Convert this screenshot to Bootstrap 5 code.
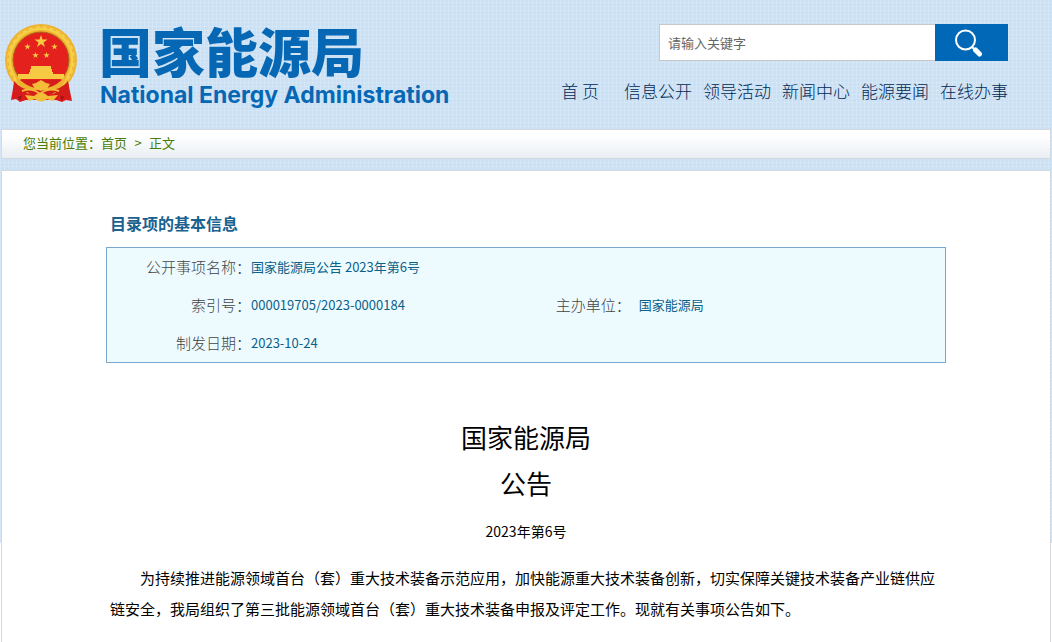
<!DOCTYPE html>
<html lang="zh-CN">
<head>
<meta charset="utf-8">
<meta name="viewport" content="width=device-width, initial-scale=1">
<title>国家能源局公告 2023年第6号</title>
<link href="https://cdn.jsdelivr.net/npm/bootstrap@5.3.0/dist/css/bootstrap.min.css" rel="stylesheet">
<style>
  body {
    font-family: "Noto Sans CJK SC", sans-serif;
    font-size: 15px;
    color: #000;
    background-color: #fff;
  }
  /* woven blue texture behind the upper part of the page */
  .backdrop {
    background:
      repeating-linear-gradient(90deg, rgba(255,255,255,.16) 0 1px, transparent 1px 4px) top / 100% 543px no-repeat,
      repeating-linear-gradient(0deg, rgba(255,255,255,.16) 0 1px, transparent 1px 4px) top / 100% 543px no-repeat,
      linear-gradient(#cae0f4, #cae0f4) top / 100% 543px no-repeat;
  }
  .masthead { min-height: 129px; padding: 24px 44px 0 5px; }
  .emblem { width: 72px; height: 80px; }
  .brand-link { color: #0668b5; gap: 22px; }
  .brand-cn { font-size: 53px; line-height: 52px; font-weight: 900; }
  .brand-en { font-family: Inter, "Open Sans", sans-serif; font-size: 23px; line-height: 38px; font-weight: 700; padding-left: 1px; }
  .search-row { width: 349px; max-width: 100%; height: 37px; }
  .search-row .form-control { font-size: 13px; border-color: #c8c8c8; padding: 0 8px; }
  .search-row .form-control::placeholder { color: #666; }
  .search-btn { width: 73px; background: #0068b7; border: 0; }
  .search-btn:hover { background: #005a9f; }
  .site-menu { gap: 11px; margin-top: 17px; }
  .site-menu a { font-size: 17px; line-height: 26px; font-weight: 300; color: #002a55; white-space: nowrap; }
  .site-menu li:first-child { margin-right: 14px; }
  .crumb-bar {
    min-height: 30px; margin: 0 1px; padding: 0 21px;
    border: 1px solid #d3d9de;
    background: linear-gradient(#fff, #fff 20%, #e9eef2);
    font-size: 13px; line-height: 26px; color: #4a7d06;
  }
  .crumb-bar > * { height: 28px; }
  .crumb-bar a { color: inherit; }
  .crumb-sep { width: 22px; }
  .sheet { margin: 11px 1px 0; border: 1px solid #d3d9de; border-bottom: 0; background: #fff; min-height: 472px; }
  .sheet-inner { max-width: 840px; padding-top: 39px; }
  .info-title { font-size: 16px; line-height: 26px; color: #1a628f; margin: 0 0 11px; padding-left: 4px; }
  .info-box { background: #edfbff; border: 1px solid #7ba7cc; }
  .info-box th, .info-box td { height: 38px; padding: 0; vertical-align: middle; }
  .info-box th { font-size: 15px; font-weight: 300; color: #444; text-align: right; }
  .info-box td { font-size: 13px; color: #0b6189; }
  .info-box .col-key { width: 144px; }
  .info-box .col-value { width: 36%; }
  .info-box .col-unit { width: 78px; }
  .notice { padding-top: 51px; }
  .notice-title { font-size: 26px; line-height: 46px; font-weight: 400; }
  .notice-no { font-size: 14px; line-height: 28px; margin: 11px 0 0; }
  .notice-text { line-height: 31px; text-indent: 2em; padding: 0 10px 0 4px; margin: 17px 0 0; }
</style>
</head>
<body>
<div class="backdrop">
  <header class="masthead d-flex justify-content-between align-items-start">
    <a href="#" class="brand-link d-flex align-items-start text-decoration-none">
      <svg class="emblem flex-shrink-0" viewBox="0 0 72 80" aria-hidden="true">
        <path d="M10 53 6 76l5-1 4 3 6-2h30l6 2 4-2 6 1-5-24z" fill="#dc1c1b"/>
        <path d="M11 60l3 14M17 64l-2 12M61 60l-3 14M55 64l2 12" stroke="#8f1717" stroke-width="1.500" fill="none"/>
        <circle cx="36" cy="36" r="36" fill="#eeb130"/>
        <circle cx="36" cy="36" r="32" fill="none" stroke="#f6cf46" stroke-width="4"/>
        <circle cx="36" cy="36" r="33" fill="none" stroke="#e2a52c" stroke-width="1" stroke-dasharray="3 4"/>
        <circle cx="36" cy="36" r="28" fill="#e5211d" stroke="#a96a18" stroke-width="1"/>
        <g fill="#f6ca42">
          <path id="star" d="M36 11l1.500 4.500h5l-4 3 1.500 4.500-4-3-4 3 1.500-4.500-4-3h5z"/>
          <use href="#star" transform="translate(4.500 14) scale(.5)"/>
          <use href="#star" transform="translate(31.500 14) scale(.5)"/>
          <use href="#star" transform="translate(12.500 22.500) scale(.5)"/>
          <use href="#star" transform="translate(23.500 22.500) scale(.5)"/>
          <path d="M26 42h20v3h1v3H25v-3h1zM24 48h24v3H24zM13 50h46v5H13z"/>
        </g>
        <path d="M14 56h44Q50 65 36 65T14 56z" fill="#d71d1b"/>
        <path d="M10 51q10 11 20 13l6 2 6-2q10-2 20-13-3 12-12 16H22Q13 63 10 51z" fill="#eeb130"/>
        <path d="M9 57q7 9 19 9h16q12 0 19-9l2 17q-10-1-15-6-8 6-14 6t-14-6q-6 5-14 6z" fill="#d51d1b"/>
        <path d="M27 60l4-1 5-3 5 3 4 1-3 5-6 2-6-2zM20 71l9 1q7-7 14 0l10-1-5 6-6-2q-6 5-12 0l-6 2z" fill="#f4bd38"/>
        <path d="M17 67q10-4 18 3 8-7 19-3" fill="none" stroke="#f4bd38" stroke-width="2"/>
      </svg>
      <span class="d-flex flex-column">
        <span class="brand-cn">国家能源局</span>
        <span class="brand-en">National Energy Administration</span>
      </span>
    </a>
    <div class="d-flex flex-column align-items-end">
      <form class="search-row d-flex" role="search">
        <input type="search" class="form-control rounded-0 shadow-none border-end-0" placeholder="请输入关键字" aria-label="请输入关键字">
        <button type="submit" class="search-btn flex-shrink-0 p-0 pe-2 d-flex align-items-center justify-content-center" aria-label="搜索">
          <svg width="30" height="30" viewBox="0 0 30 30" fill="none" stroke="#fff" aria-hidden="true">
            <circle cx="12.500" cy="12" r="9.500" stroke-width="2"/>
            <path d="M19 19l3 3" stroke-width="2"/>
            <path d="M22.500 22l4 4" stroke-width="5" stroke-linecap="round"/>
          </svg>
        </button>
      </form>
      <nav aria-label="主导航">
        <ul class="site-menu list-unstyled d-flex mb-0">
          <li><a class="text-decoration-none" href="#">首 页</a></li>
          <li><a class="text-decoration-none" href="#">信息公开</a></li>
          <li><a class="text-decoration-none" href="#">领导活动</a></li>
          <li><a class="text-decoration-none" href="#">新闻中心</a></li>
          <li><a class="text-decoration-none" href="#">能源要闻</a></li>
          <li><a class="text-decoration-none" href="#">在线办事</a></li>
        </ul>
      </nav>
    </div>
  </header>

  <nav class="crumb-bar d-flex" aria-label="当前位置">
    <span>您当前位置：</span><a class="text-decoration-none" href="#">首页</a><span class="crumb-sep text-center">&gt;</span><span>正文</span>
  </nav>

  <main class="sheet">
    <div class="sheet-inner mx-auto">
      <h2 class="info-title fw-bold">目录项的基本信息</h2>
      <div class="info-box">
        <table class="w-100">
          <colgroup><col class="col-key"><col class="col-value"><col class="col-unit"><col></colgroup>
          <tbody>
            <tr><th scope="row">公开事项名称：</th><td colspan="3">国家能源局公告 2023年第6号</td></tr>
            <tr><th scope="row">索引号：</th><td>000019705/2023-0000184</td><th scope="row" class="text-nowrap">主办单位：</th><td class="ps-2">国家能源局</td></tr>
            <tr><th scope="row">制发日期：</th><td colspan="3">2023-10-24</td></tr>
          </tbody>
        </table>
      </div>
      <article class="notice">
        <h1 class="notice-title text-center m-0">国家能源局<br>公告</h1>
        <p class="notice-no text-center">2023年第6号</p>
        <p class="notice-text">为持续推进能源领域首台（套）重大技术装备示范应用，加快能源重大技术装备创新，切实保障关键技术装备产业链供应链安全，我局组织了第三批能源领域首台（套）重大技术装备申报及评定工作。现就有关事项公告如下。</p>
      </article>
    </div>
  </main>
</div>
<script src="https://cdn.jsdelivr.net/npm/bootstrap@5.3.0/dist/js/bootstrap.bundle.min.js"></script>
</body>
</html>
